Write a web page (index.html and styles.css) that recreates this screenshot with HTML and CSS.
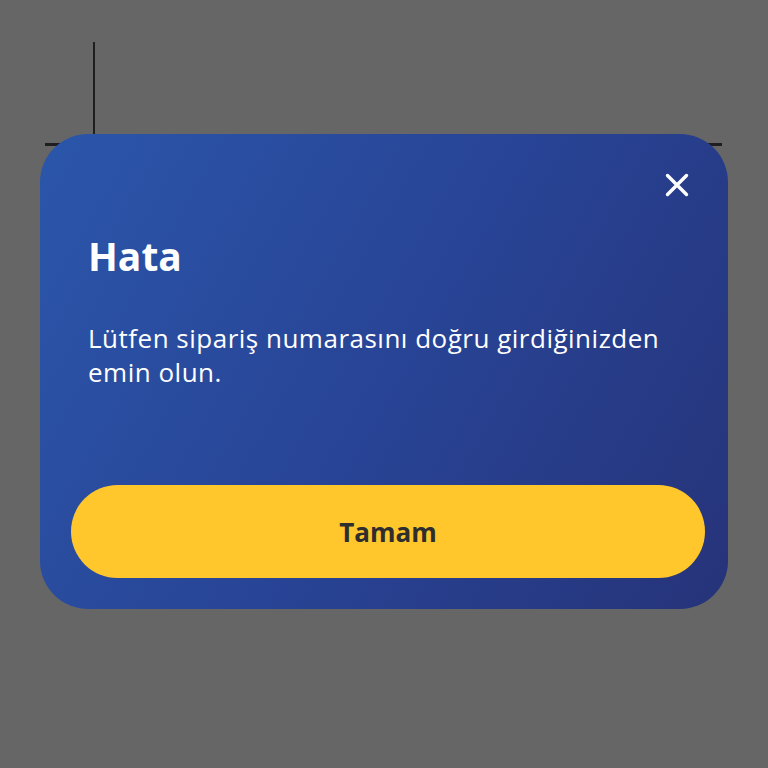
FILE: index.html
```html
<!DOCTYPE html>
<html lang="tr">

<head>
    <meta charset="UTF-8">
    <meta name="viewport" content="width=device-width, initial-scale=1.0">
    <title>Sipariş Takibi</title>
    <link rel="stylesheet" href="styles.css">
</head>

<body>
    <!-- Arka plandaki sayfa (modal açıkken karartılmış) -->
    <div class="page">
        <div class="page-rule">
            <div class="page-caret"></div>
        </div>
    </div>

    <!-- Hata modalı -->
    <div class="modal" id="modal">
        <div class="modal-content">
            <button class="modal-close" aria-label="Kapat" onclick="closeModal()">
                <svg width="24" height="24" viewBox="0 0 24 24">
                    <path d="M2.5 2.5 L21.5 21.5 M21.5 2.5 L2.5 21.5" stroke="#ffffff" stroke-width="3.4" stroke-linecap="round" fill="none"/>
                </svg>
            </button>
            <h2 class="modal-title">Hata</h2>
            <p class="modal-message">Lütfen sipariş numarasını doğru girdiğinizden emin olun.</p>
            <button class="modal-ok" onclick="closeModal()">Tamam</button>
        </div>
    </div>

    <script>
        function closeModal() {
            document.getElementById('modal').style.display = 'none';
        }
    </script>
</body>

</html>
```

FILE: styles.css
```css
body {
    margin: 0;
    font-family: 'Open Sans', 'Noto Sans', sans-serif;
    background-color: #666666;
    height: 100vh;
}

.page {
    padding: 42px 46px 0 45px;
}

.page-rule {
    height: 101px;
    border-bottom: 3px solid #1e1e1e;
}

.page-caret {
    margin-left: 48px;
    height: 100%;
    border-left: 2px solid #1e1e1e;
}

.modal {
    position: fixed;
    top: 0;
    left: 0;
    width: 100%;
    height: 100%;
    display: flex;
    justify-content: center;
    align-items: flex-start;
    padding-top: 134px;
    box-sizing: border-box;
}

.modal-content {
    width: 688px;
    box-sizing: border-box;
    padding: 37px 23px 31px 31px;
    border-radius: 48px;
    background: linear-gradient(120deg, #2b56aa 0%, #284496 50%, #263379 100%);
    color: #ffffff;
    display: flex;
    flex-direction: column;
}

.modal-close {
    align-self: flex-end;
    width: 28px;
    height: 28px;
    margin-right: 14px;
    padding: 2px;
    border: none;
    background: none;
    cursor: pointer;
}

.modal-close svg {
    display: block;
    width: 24px;
    height: 24px;
}

.modal-title {
    margin: 35px 0 0 17px;
    font-size: 39px;
    line-height: 44px;
    font-weight: 700;
}

.modal-message {
    margin: 43px 20px 0 17px;
    font-size: 26px;
    line-height: 34px;
    letter-spacing: 0.5px;
}

.modal-ok {
    margin-top: 96px;
    height: 93px;
    border: none;
    border-radius: 47px;
    background-color: #ffc72c;
    color: #2e2e2e;
    font-family: inherit;
    font-size: 26px;
    font-weight: 700;
    cursor: pointer;
}
```
